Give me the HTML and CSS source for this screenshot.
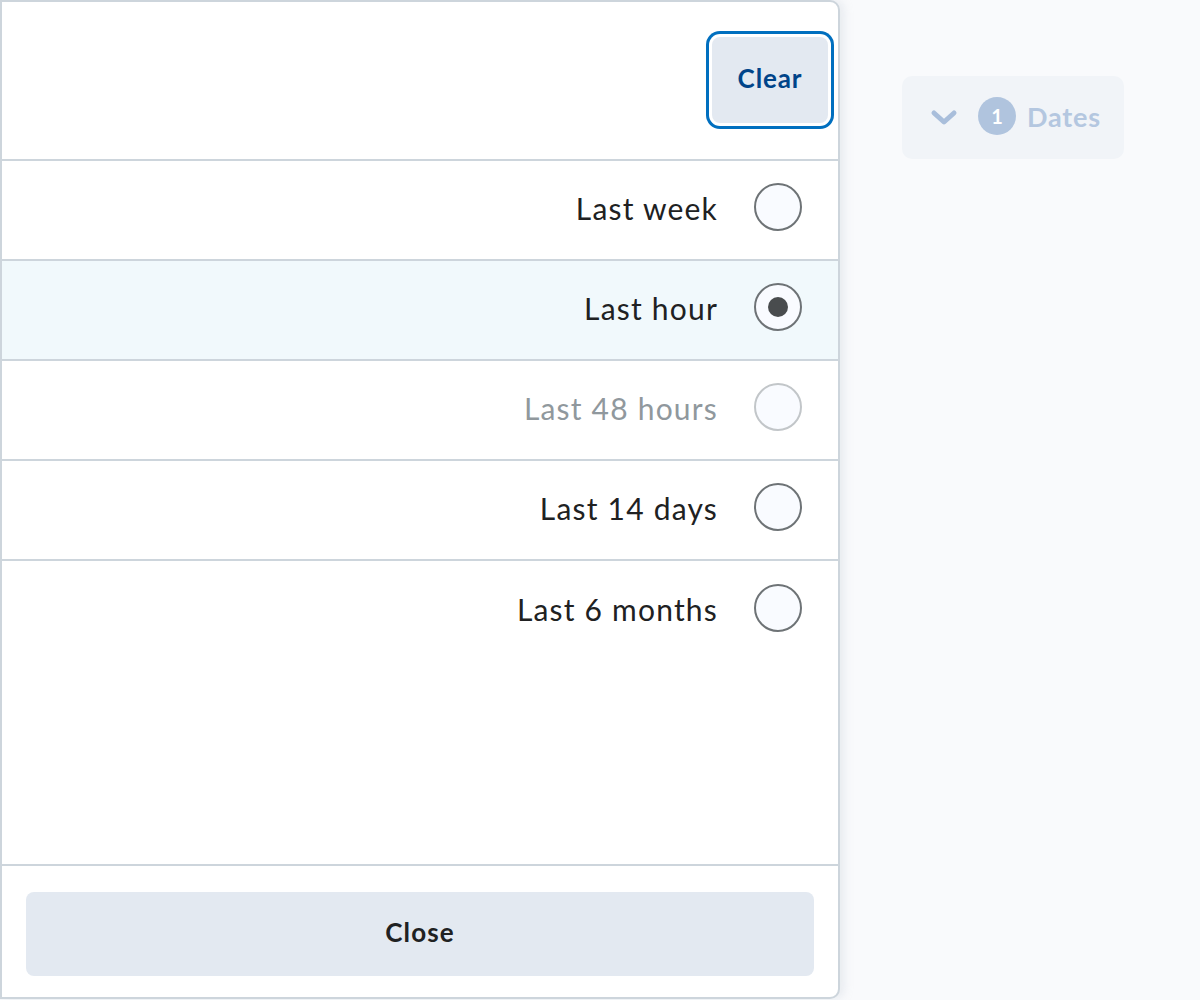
FILE: index.html
```html
<!DOCTYPE html>
<html>
<head>
<meta charset="utf-8">
<link rel="stylesheet" href="styles.css">
</head>
<body>
<div class="page">
  <div class="panel">
    <div class="panel-header">
      <button class="btn-clear">Clear</button>
    </div>
    <div class="options">
      <div class="option">
        <span class="label">Last week</span>
        <span class="radio"></span>
      </div>
      <div class="option selected">
        <span class="label">Last hour</span>
        <span class="radio checked"></span>
      </div>
      <div class="option disabled">
        <span class="label">Last 48 hours</span>
        <span class="radio"></span>
      </div>
      <div class="option">
        <span class="label">Last 14 days</span>
        <span class="radio"></span>
      </div>
      <div class="option last">
        <span class="label">Last 6 months</span>
        <span class="radio"></span>
      </div>
    </div>
    <div class="panel-footer">
      <button class="btn-close">Close</button>
    </div>
  </div>
  <div class="side">
    <div class="dates-btn">
      <svg class="chev" width="28" height="18" viewBox="0 0 28 18"><path d="M4 4 L14 13 L24 4" fill="none" stroke="#a9bedb" stroke-width="5" stroke-linecap="round" stroke-linejoin="round"/></svg>
      <span class="count">1</span>
      <span class="dates-text">Dates</span>
    </div>
  </div>
</div>
</body>
</html>
```

FILE: styles.css
```css
* { box-sizing: border-box; }
html, body {
  margin: 0;
  padding: 0;
  background: #f9fafc;
  font-family: Lato, "Noto Sans", sans-serif;
}
.page {
  display: flex;
  align-items: flex-start;
  width: 1200px;
  height: 1000px;
}
.panel {
  width: 840px;
  height: 999px;
  background: #fff;
  border: 2px solid #cdd5dc;
  border-radius: 0 10px 10px 0;
  box-shadow: 4px 0 10px rgba(180, 190, 205, 0.25);
  display: flex;
  flex-direction: column;
}
.panel-header {
  height: 159px;
  display: flex;
  justify-content: flex-end;
  align-items: center;
  padding-right: 10px;
  padding-bottom: 2px;
  border-bottom: 2px solid #cdd5dc;
}
.btn-clear {
  width: 116px;
  height: 86px;
  border: none;
  border-radius: 8px;
  background: #e3e9f1;
  color: #004489;
  font-family: Lato, sans-serif;
  font-weight: 700;
  font-size: 26px;
  letter-spacing: 0.9px;
  padding: 0 0 4px;
  box-shadow: 0 0 0 3px #fff, 0 0 0 6px #006fbf;
}
.options {
  flex: 1;
}
.option {
  height: 100px;
  display: flex;
  justify-content: flex-end;
  align-items: center;
  padding-right: 36px;
  padding-bottom: 4px;
  gap: 36px;
  border-bottom: 2px solid #cdd5dc;
}
.option.last { border-bottom: none; }
.option.selected { background: #f1f9fc; }
.label {
  font-size: 30px;
  color: #202122;
  letter-spacing: 1.2px;
}
.option.disabled .label { color: #90989d; }
.radio {
  width: 48px;
  height: 48px;
  border-radius: 50%;
  border: 2px solid #6e7376;
  background: #f9fbff;
  display: flex;
  align-items: center;
  justify-content: center;
  margin-top: -2px;
}
.option.disabled .radio { border-color: #c2c6c9; }
.radio.checked::after {
  content: "";
  width: 20px;
  height: 20px;
  border-radius: 50%;
  background: #494c4e;
}
.panel-footer {
  border-top: 2px solid #cdd5dc;
  padding: 26px 24px 21px;
}
.btn-close {
  width: 100%;
  height: 84px;
  border: none;
  border-radius: 8px;
  background: #e3e9f1;
  color: #202122;
  font-family: Lato, sans-serif;
  font-weight: 700;
  font-size: 26px;
  letter-spacing: 1.1px;
  padding: 0 0 5px;
}
.side {
  padding-left: 62px;
  padding-top: 76px;
}
.dates-btn {
  width: 222px;
  height: 83px;
  background: #f1f4f8;
  border-radius: 10px;
  display: flex;
  align-items: center;
  padding-left: 28px;
  padding-bottom: 3px;
}
.chev { margin-right: 20px; margin-top: 3px; }
.count {
  width: 38px;
  height: 38px;
  border-radius: 50%;
  background: #b0c4de;
  color: #fff;
  font-weight: 700;
  font-size: 20px;
  display: flex;
  align-items: center;
  justify-content: center;
  margin-right: 11px;
}
.dates-text {
  font-weight: 700;
  font-size: 27px;
  letter-spacing: 0.8px;
  color: #b4c7e0;
}
```
